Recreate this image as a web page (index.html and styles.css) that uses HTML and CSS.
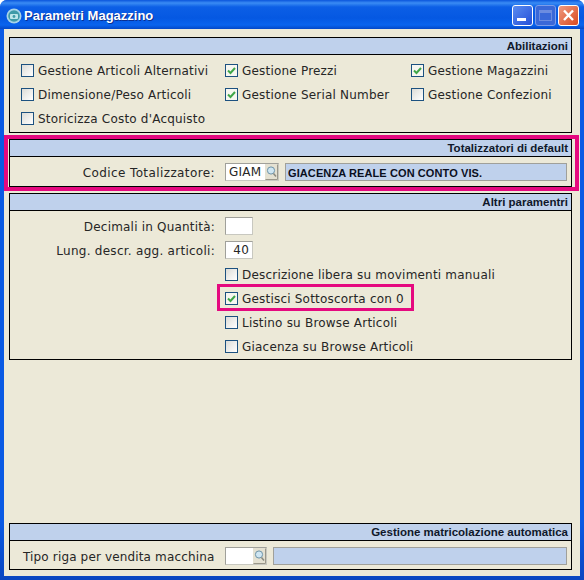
FILE: index.html
```html
<!DOCTYPE html>
<html lang="it">
<head>
    <meta charset="UTF-8" />
    <title>Parametri Magazzino</title>
    <link rel="stylesheet" href="styles.css">
</head>
<body>
    <div class="window">
        <div class="titlebar">
            <svg class="app-icon" width="16" height="16" viewBox="0 0 16 16">
                <circle cx="8" cy="8" r="7.5" fill="#a8d4e8"/>
                <circle cx="8" cy="8" r="5.8" fill="#3f9aa8"/>
                <rect x="4" y="6" width="8" height="5" rx="1" fill="#bfe6ea"/>
                <circle cx="8" cy="8.5" r="1.4" fill="#3f9aa8"/>
            </svg>
            <span class="title">Parametri Magazzino</span>
            <div class="buttons">
                <div class="btn btn-min"><span class="min-glyph"></span></div>
                <div class="btn btn-max"><span class="max-glyph"></span></div>
                <div class="btn btn-close">
                    <svg width="21" height="21" viewBox="0 0 21 21"><path d="M6 5.5l9 9.5M15 5.5l-9 9.5" stroke="#fff" stroke-width="2.4" fill="none"/></svg>
                </div>
            </div>
        </div>

        <div class="client">
            <div class="panel">
                <div class="panel-head">Abilitazioni</div>
                <div class="panel-body grid-abil">
                    <label class="check"><span class="box"></span>Gestione Articoli Alternativi</label>
                    <label class="check"><span class="box on"><svg width="11" height="11" viewBox="0 0 11 11"><path d="M2 5.5l2.5 2.5 4.5-5" stroke="#3fa648" stroke-width="2" fill="none"/></svg></span>Gestione Prezzi</label>
                    <label class="check"><span class="box on"><svg width="11" height="11" viewBox="0 0 11 11"><path d="M2 5.5l2.5 2.5 4.5-5" stroke="#3fa648" stroke-width="2" fill="none"/></svg></span>Gestione Magazzini</label>
                    <label class="check"><span class="box"></span>Dimensione/Peso Articoli</label>
                    <label class="check"><span class="box on"><svg width="11" height="11" viewBox="0 0 11 11"><path d="M2 5.5l2.5 2.5 4.5-5" stroke="#3fa648" stroke-width="2" fill="none"/></svg></span>Gestione Serial Number</label>
                    <label class="check"><span class="box"></span>Gestione Confezioni</label>
                    <label class="check"><span class="box"></span>Storicizza Costo d'Acquisto</label>
                </div>
            </div>

            <div class="panel">
                <div class="panel-head">Totalizzatori di default</div>
                <div class="panel-body field-row">
                    <span class="field-label field-label-wide">Codice Totalizzatore:</span>
                    <div class="lookup lookup-giam">
                        <span class="lookup-value">GIAM</span>
                        <svg class="lens" width="13" height="16" viewBox="0 0 13 16"><rect x="0" y="0" width="13" height="16" fill="#e4e1d2"/><path d="M12.5 .5v15h-12" stroke="#9a978a" fill="none"/><circle cx="6" cy="6.5" r="3.6" fill="#cfe6f2" stroke="#6d93a8"/><path d="M8.5 9.5l2.5 3" stroke="#8a8a80" stroke-width="1.5"/></svg>
                    </div>
                    <div class="readout">GIACENZA REALE CON CONTO VIS.</div>
                </div>
                <div class="mark mark-panel"></div>
            </div>

            <div class="panel">
                <div class="panel-head">Altri paramentri</div>
                <div class="panel-body altri">
                    <div class="param-row">
                        <span class="field-label">Decimali in Quantità:</span>
                        <div class="small-input"></div>
                    </div>
                    <div class="param-row">
                        <span class="field-label field-label-long">Lung. descr. agg. articoli:</span>
                        <div class="small-input">40</div>
                    </div>
                    <label class="check indent"><span class="box"></span>Descrizione libera su movimenti manuali</label>
                    <label class="check indent"><span class="box on"><svg width="11" height="11" viewBox="0 0 11 11"><path d="M2 5.5l2.5 2.5 4.5-5" stroke="#3fa648" stroke-width="2" fill="none"/></svg></span>Gestisci Sottoscorta con 0<span class="mark mark-check"></span></label>
                    <label class="check indent"><span class="box"></span>Listino su Browse Articoli</label>
                    <label class="check indent"><span class="box"></span>Giacenza su Browse Articoli</label>
                </div>
            </div>

            <div class="panel panel-bottom">
                <div class="panel-head">Gestione matricolazione automatica</div>
                <div class="panel-body field-row field-row-bottom">
                    <span class="field-label field-label-left">Tipo riga per vendita macchina</span>
                    <div class="lookup lookup-tipo">
                        <span class="lookup-value"></span>
                        <svg class="lens" width="13" height="16" viewBox="0 0 13 16"><rect x="0" y="0" width="13" height="16" fill="#e4e1d2"/><path d="M12.5 .5v15h-12" stroke="#9a978a" fill="none"/><circle cx="6" cy="6.5" r="3.6" fill="#cfe6f2" stroke="#6d93a8"/><path d="M8.5 9.5l2.5 3" stroke="#8a8a80" stroke-width="1.5"/></svg>
                    </div>
                    <div class="readout"></div>
                </div>
            </div>
        </div>
    </div>
</body>
</html>
```

FILE: styles.css
```css
* {
    box-sizing: border-box;
}
body {
    margin: 0;
    width: 584px;
    height: 580px;
    overflow: hidden;
    background: #fff;
    font-family: "DejaVu Sans", sans-serif;
    font-size: 12px;
    letter-spacing: 0.2px;
    color: #262626;
}
.window {
    width: 584px;
    height: 580px;
    display: flex;
    flex-direction: column;
    border-radius: 7px 7px 0 0;
    background: linear-gradient(#0a5ae4 90%, #0a46c0);
}
.titlebar {
    height: 29px;
    flex: none;
    display: flex;
    align-items: center;
    padding: 2px 5px 0 6px;
    border-radius: 7px 7px 0 0;
    background: linear-gradient(#0a55dc 0, #3a8cf4 3px, #0c5fe6 7px, #0558e2 18px, #0a64ee 25px, #0448c8 29px);
}
.app-icon {
    margin-right: 2px;
}
.title {
    color: #fff;
    font-family: "Liberation Sans", sans-serif;
    font-size: 13px;
    font-weight: bold;
    letter-spacing: 0;
    text-shadow: 1px 1px 0 #0a2f90;
}
.buttons {
    margin-left: auto;
    display: flex;
    gap: 2px;
}
.btn {
    width: 21px;
    height: 21px;
    border: 1px solid #fff;
    border-radius: 3px;
    background: #2a5fe0;
}
.btn-min {
    background: linear-gradient(135deg, #5a8cf0, #2550d8);
}
.btn-max {
    background: #3a68d8;
    border-color: #7c9ce8;
}
.btn-close {
    background: linear-gradient(135deg, #f09a80, #d84a20);
}
.btn-close svg {
    display: block;
    margin: -1px;
}
.min-glyph {
    display: block;
    width: 9px;
    height: 3px;
    margin: 12px 0 0 4px;
    background: #fff;
}
.max-glyph {
    display: block;
    width: 13px;
    height: 11px;
    margin: 4px 0 0 3px;
    border: 1px solid #6c8ce0;
    border-top-width: 3px;
}
.client {
    flex: 1;
    margin: 0 4px 4px;
    padding: 8px 8px 6px 5px;
    background: #ece9d8;
    display: flex;
    flex-direction: column;
    gap: 6px;
}
.panel {
    flex: none;
    border: 1px solid #000;
    position: relative;
}
.panel-bottom {
    margin-top: auto;
}
.panel-head {
    height: 17px;
    padding: 0 3px 1px 0;
    border-bottom: 1px solid #000;
    background: #bfd1ec;
    text-align: right;
    font-family: "Liberation Sans", sans-serif;
    font-size: 11.5px;
    font-weight: bold;
    letter-spacing: 0;
    line-height: 16px;
    color: #10182a;
}
.panel-body {
    padding-left: 11px;
}
.grid-abil {
    display: grid;
    grid-template-columns: 204px 186px 1fr;
    grid-auto-rows: 24px;
    padding-top: 3px;
    padding-bottom: 2px;
}
.check {
    display: flex;
    align-items: center;
    height: 24px;
    padding-top: 2px;
    white-space: nowrap;
    position: relative;
}
.box {
    width: 13px;
    height: 13px;
    margin: -2px 4px 0 0;
    flex: none;
    border: 1px solid #1c5180;
    background: linear-gradient(135deg, #dcdcd7, #fff);
}
.box.on {
    background: #f6f6f0;
}
.box svg {
    display: block;
}
.field-row {
    display: flex;
    align-items: center;
    height: 29px;
    padding-right: 4px;
}
.field-row-bottom {
    height: 28px;
    padding-top: 1px;
}
.field-label {
    width: 204px;
    flex: none;
    text-align: right;
    padding: 2px 10px 0 0;
}
.field-label-wide {
    letter-spacing: 0.4px;
}
.field-label-long {
    letter-spacing: 0.27px;
}
.field-label-left {
    padding: 2px 0 0 2px;
    text-align: left;
    letter-spacing: 0.15px;
}
.lookup {
    height: 18px;
    display: flex;
    align-items: center;
    padding: 0 0 0 3px;
    flex: none;
    background: #fff;
    border: 1px solid;
    border-color: #a0a09a #c8c8c0 #c8c8c0 #a0a09a;
    margin-right: 6px;
}
.lookup-giam {
    width: 54px;
}
.lookup-tipo {
    width: 42px;
}
.lookup-value {
    flex: 1;
}
.lens {
    display: block;
}
.readout {
    flex: 1;
    height: 18px;
    padding-left: 2px;
    border: 1px solid #a0a09a;
    background: #bfd1ec;
    font-family: "Liberation Sans", sans-serif;
    font-size: 11px;
    font-weight: bold;
    letter-spacing: 0.1px;
    line-height: 18px;
    color: #0a0f1e;
}
.altri {
    padding-top: 3px;
    padding-bottom: 1px;
}
.param-row {
    display: flex;
    align-items: center;
    height: 24px;
}
.small-input {
    width: 28px;
    height: 18px;
    background: #fff;
    border: 1px solid;
    border-color: #a0a09a #c8c8c0 #c8c8c0 #a0a09a;
    text-align: right;
    padding-right: 3px;
    line-height: 17px;
}
.indent {
    margin-left: 204px;
}
.mark {
    position: absolute;
    pointer-events: none;
}
.mark-panel {
    left: -6px;
    right: -8px;
    top: -5px;
    bottom: -5px;
    border: 4px solid #e5097f;
}
.mark-check {
    left: -8px;
    width: 197px;
    top: -2px;
    height: 27px;
    border: 3px solid #e5097f;
}
```
